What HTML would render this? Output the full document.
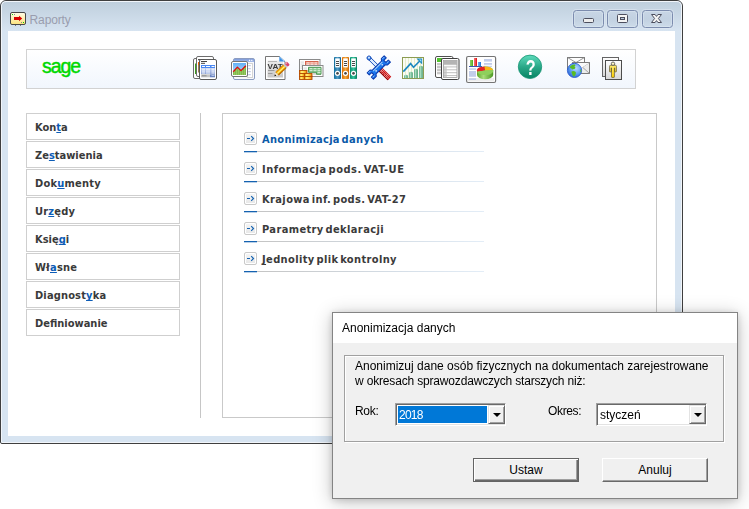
<!DOCTYPE html>
<html lang="pl">
<head>
<meta charset="utf-8">
<title>Raporty</title>
<style>
*{box-sizing:border-box;margin:0;padding:0}
html,body{width:749px;height:509px;overflow:hidden;background:#fff}
body{position:relative;font-family:"Liberation Sans",sans-serif;font-size:12px;color:#000}
.abs{position:absolute}
/* main window */
#win{position:absolute;left:0;top:0;width:683px;height:444px;border:1px solid #3f3f3f;border-radius:6px 6px 2px 2px;background:#d7e4f1;overflow:hidden}
#win .hl{position:absolute;left:0;top:0;right:0;bottom:0;border:1px solid #f1f5fa;border-radius:5px 5px 1px 1px}
#cap{position:absolute;left:1px;top:1px;right:1px;height:29px;background:linear-gradient(#bfcfdd,#d7e4f1)}
#client{position:absolute;left:7px;top:30px;width:667px;height:405px;background:#fff}
#title{position:absolute;left:29.6px;top:12px;font-size:12px;letter-spacing:-.15px;color:#9a9dae;white-space:nowrap;line-height:16px}
.cb{position:absolute;top:10px;height:18px;width:31px;border:1px solid #7c8cae;border-radius:3.5px;background:linear-gradient(#c8d6e5,#c2d1e1 50%,#cddbe9);box-shadow:0 0 0 1px rgba(225,234,244,.55), inset 0 0 0 1px rgba(225,235,245,.45)}
/* toolbar */
#tb{position:absolute;left:26px;top:49px;width:610px;height:40px;border:1px solid #d2d2d2;background:linear-gradient(#ffffff,#f1f6fd)}
#sage{position:absolute;left:42px;top:54px;font-size:19.5px;font-weight:normal;color:#00d800;-webkit-text-stroke:.45px #00d800;letter-spacing:-1.1px;line-height:24px;white-space:nowrap}
.ic{position:absolute;overflow:visible}
/* left buttons */
.lb{position:absolute;left:26px;width:154px;height:27px;border:1px solid #cfcfcf;background:#fff;font-family:"DejaVu Sans Condensed","DejaVu Sans","Liberation Sans",sans-serif;font-weight:bold;font-size:11px;color:#3a3a3a;line-height:27px;padding-left:8px;white-space:nowrap}
.lb u{color:#0c5cb6;text-decoration:underline;text-decoration-skip-ink:none;text-decoration-thickness:1px;text-underline-offset:1px}
.mi u{text-decoration-skip-ink:none;text-underline-offset:1px}
#vdiv{position:absolute;left:200px;top:113px;width:1px;height:305px;background:#c6c6c6}
#panel{position:absolute;left:222px;top:113px;width:435px;height:305px;border:1px solid #c9c9c9;background:#fff}
.mi{position:absolute;left:244px;width:240px;height:22px}
.mi .ar{position:absolute;left:0;top:0;width:13px;height:13px;border:1px solid #c9c9c9;border-radius:2px;background:linear-gradient(#f6f6f6,#e6e6e6);box-shadow:inset 0 0 0 1px #fff}
.mi .tx{position:absolute;left:18px;top:0px;font-family:"DejaVu Sans Condensed","DejaVu Sans","Liberation Sans",sans-serif;font-weight:bold;font-size:11px;line-height:15px;color:#3b3b3b;white-space:nowrap;word-spacing:-2px}
.mi.sel .tx{color:#0b5aa8}
.mi .ln{position:absolute;left:13px;top:19px;width:227px;height:1px;background:linear-gradient(90deg,#c4c4c4,#d4dde6 60%,#e3edf7)}
.mi .bl{position:absolute;left:0;top:19px;width:13px;height:2px;background:linear-gradient(#1562b0 50%,rgba(21,98,176,.3) 50%)}
/* dialog */
#dlg{position:absolute;left:332px;top:312px;width:406px;height:187px;border:1px solid #848484;background:#f0f0f0;box-shadow:0 3px 18px rgba(0,0,0,.24),0 1px 7px rgba(0,0,0,.14)}
#dcap{position:absolute;left:0;top:0;right:0;height:30px;background:#fff}
#dtitle{position:absolute;left:9px;top:8px;font-size:12px;line-height:14px;white-space:nowrap;color:#000}
#grp{position:absolute;left:11px;top:42px;width:380px;height:87px;border:1px solid #a0a0a0;box-shadow:1px 1px 0 #fff, inset 1px 1px 0 #fff}
.dt{position:absolute;white-space:nowrap;font-size:12px;line-height:15px;color:#000}
.combo{position:absolute;width:111px;height:23px;background:#fff;border:1px solid;border-color:#a0a0a0 #fff #fff #a0a0a0;box-shadow:inset 1px 1px 0 #696969, inset -1px -1px 0 #e3e3e3}
.combo .dd{position:absolute;right:0px;top:1px;width:17px;height:19px;background:#f0f0f0;border:1px solid;border-color:#e3e3e3 #696969 #696969 #e3e3e3;box-shadow:inset 1px 1px 0 #fff, inset -1px -1px 0 #a0a0a0}
.combo .dd:after{content:"";position:absolute;left:4px;top:7px;border:4px solid transparent;border-top:4px solid #000;border-bottom:0}
.combo .sel{position:absolute;left:2px;top:2px;width:89px;height:17px;background:#0078d7;color:#fff;font-size:12px;line-height:19px;padding-left:1px;letter-spacing:-.75px}
.combo .val{position:absolute;left:3px;top:3px;font-size:12px;line-height:17px;color:#000}
.btn{position:absolute;top:145px;height:24px;width:106px;background:#f0f0f0;text-align:center;font-size:12px;line-height:23px;border:1px solid;border-color:#fff #696969 #696969 #fff;box-shadow:inset -1px -1px 0 #a0a0a0}
.btn.def{border:1px solid #646464;box-shadow:inset 1px 1px 0 #fff, inset -1px -1px 0 #696969, inset -2px -2px 0 #a0a0a0;line-height:23px}
</style>
</head>
<body>
<div id="win">
  <div id="cap"></div>
  <div class="hl"></div>
  <div id="client"></div>
</div>
<div id="title">Raporty</div>
<div class="cb" style="left:573px"></div>
<div class="cb" style="left:607px"></div>
<div class="cb" style="left:642px"></div>

<div id="tb"></div>
<div id="sage">sage</div>

<div class="lb" style="top:113px">Kon<u>t</u>a</div>
<div class="lb" style="top:141px">Ze<u>s</u>tawienia</div>
<div class="lb" style="top:169px;letter-spacing:.22px">Dok<u>u</u>menty</div>
<div class="lb" style="top:197px;letter-spacing:.18px">Ur<u>z</u>ędy</div>
<div class="lb" style="top:225px">Księ<u>g</u>i</div>
<div class="lb" style="top:253px;letter-spacing:.2px">Wł<u>a</u>sne</div>
<div class="lb" style="top:281px;letter-spacing:.15px">Diagnost<u>y</u>ka</div>
<div class="lb" style="top:309px">Def<u>i</u>niowanie</div>

<div id="vdiv"></div>
<div id="panel"></div>

<div class="mi sel" style="top:132px"><div class="ar"></div><div class="tx" style="letter-spacing:.32px">Anonimizacja danych</div><div class="ln"></div><div class="bl"></div></div>
<div class="mi" style="top:162px"><div class="ar"></div><div class="tx" style="letter-spacing:.5px">Informacja pods. VAT-UE</div><div class="ln"></div><div class="bl"></div></div>
<div class="mi" style="top:192px"><div class="ar"></div><div class="tx" style="letter-spacing:.38px">Krajowa inf. pods. VAT-27</div><div class="ln"></div><div class="bl"></div></div>
<div class="mi" style="top:222px"><div class="ar"></div><div class="tx" style="letter-spacing:.38px">Parametry deklaracji</div><div class="ln"></div><div class="bl"></div></div>
<div class="mi" style="top:252px"><div class="ar"></div><div class="tx" style="letter-spacing:.37px"><u>J</u>ednolity plik kontrolny</div><div class="ln"></div><div class="bl"></div></div>

<!--ICONS-->
<svg class="abs" style="left:0;top:0;will-change:transform" width="749" height="509" viewBox="0 0 749 509">
<defs>
<linearGradient id="gCream" x1="0" y1="0" x2="0" y2="1"><stop offset="0" stop-color="#fffde8"/><stop offset="1" stop-color="#fde27c"/></linearGradient>
<linearGradient id="gTbl" x1="0" y1="0" x2="0" y2="1"><stop offset="0" stop-color="#c4d2f2"/><stop offset="1" stop-color="#8fa4d6"/></linearGradient>
<linearGradient id="gSky" x1="0" y1="0" x2="0" y2="1"><stop offset="0" stop-color="#62b0f6"/><stop offset="1" stop-color="#c6e4fc"/></linearGradient>
<linearGradient id="gDoc" x1="0" y1="0" x2="0" y2="1"><stop offset="0" stop-color="#ececec"/><stop offset="1" stop-color="#c6c6c6"/></linearGradient>
<linearGradient id="gDoc2" x1="0" y1="0" x2="0" y2="1"><stop offset="0" stop-color="#ffffff"/><stop offset="1" stop-color="#d6d6d6"/></linearGradient>
<linearGradient id="gBrick" x1="0" y1="0" x2="1" y2="0"><stop offset="0" stop-color="#f08a08"/><stop offset=".3" stop-color="#fff27a"/><stop offset=".6" stop-color="#ffd040"/><stop offset="1" stop-color="#e87800"/></linearGradient>
<linearGradient id="gBB" x1="0" y1="0" x2="1" y2="0"><stop offset="0" stop-color="#0f6c9c"/><stop offset=".5" stop-color="#4f9cc6"/><stop offset="1" stop-color="#0f5f8c"/></linearGradient>
<linearGradient id="gBO" x1="0" y1="0" x2="1" y2="0"><stop offset="0" stop-color="#d86c04"/><stop offset=".5" stop-color="#f4a83c"/><stop offset="1" stop-color="#cc6200"/></linearGradient>
<linearGradient id="gBG" x1="0" y1="0" x2="1" y2="0"><stop offset="0" stop-color="#08906e"/><stop offset=".5" stop-color="#34c49c"/><stop offset="1" stop-color="#067a5c"/></linearGradient>
<linearGradient id="gBar" x1="0" y1="0" x2="1" y2="0"><stop offset="0" stop-color="#2f9468"/><stop offset=".4" stop-color="#b4e4c8"/><stop offset="1" stop-color="#2a8c60"/></linearGradient>
<linearGradient id="gHelp" x1="0" y1="0" x2="0" y2="1"><stop offset="0" stop-color="#5edcbc"/><stop offset=".5" stop-color="#2aa888"/><stop offset="1" stop-color="#078464"/></linearGradient>
<radialGradient id="gGlobe" cx=".6" cy=".35" r=".7"><stop offset="0" stop-color="#b8dcff"/><stop offset=".6" stop-color="#5a9cf0"/><stop offset="1" stop-color="#2c62d4"/></radialGradient>
<linearGradient id="gPieS" x1="0" y1="0" x2="1" y2="0"><stop offset="0" stop-color="#5aa62c"/><stop offset=".4" stop-color="#a8dc78"/><stop offset="1" stop-color="#4c9824"/></linearGradient>
<linearGradient id="gWin" x1="0" y1="0" x2="0" y2="1"><stop offset="0" stop-color="#7c9ada"/><stop offset="1" stop-color="#aabeea"/></linearGradient>
<linearGradient id="gYel" x1="0" y1="0" x2="0" y2="1"><stop offset="0" stop-color="#ffec70"/><stop offset="1" stop-color="#ffd000"/></linearGradient>
</defs>

<!-- caption glyphs -->
<g id="capg">
<rect x="583.5" y="18.500" width="10" height="4" rx="1" fill="#ececec" stroke="#4c4e5e"/>
<rect x="617.500" y="14.500" width="10" height="8" rx="1" fill="#f4f4f4" stroke="#4c4e5e"/>
<rect x="620.500" y="17.500" width="4" height="2" fill="#b8c8dc" stroke="#4c4e5e"/>
<path d="M651.500 14.500h3.600l1.400 1.900 1.400-1.900h3.600l-3.100 4 3.100 4h-3.600l-1.400-1.900-1.400 1.900h-3.600l3.100-4z" fill="#f4f4f4" stroke="#4c4e5e" stroke-linejoin="round"/>
</g>
<!-- /caption glyphs -->
<!-- arrows -->
<g fill="#1262b2" stroke="#1262b2" stroke-width="0">
<path d="M247 138h3v1h-3z"/><path d="M251.200 136.200l2.300 2.300-2.300 2.300" fill="none" stroke-width="1.150"/>
<path d="M247 168h3v1h-3z"/><path d="M251.200 166.200l2.300 2.300-2.300 2.300" fill="none" stroke-width="1.150"/>
<path d="M247 198h3v1h-3z"/><path d="M251.200 196.200l2.300 2.300-2.300 2.300" fill="none" stroke-width="1.150"/>
<path d="M247 228h3v1h-3z"/><path d="M251.200 226.200l2.300 2.300-2.300 2.300" fill="none" stroke-width="1.150"/>
<path d="M247 258h3v1h-3z"/><path d="M251.200 256.200l2.300 2.300-2.300 2.300" fill="none" stroke-width="1.150"/>
</g>
<!-- /arrows -->
<!-- title icon -->
<g id="i-title">
<rect x="10.5" y="12.5" width="15" height="12" rx="1.5" fill="url(#gCream)" stroke="#484848"/>
<path d="M14 17h5v-1.2l3.2 2.7-3.2 2.7v-1.2h-5z" fill="#d80000"/>
<rect x="12" y="14" width="1" height="1" fill="#00d000"/><rect x="14" y="14" width="1" height="1" fill="#888"/>
<rect x="23" y="22" width="1" height="1" fill="#00d000"/><rect x="21" y="22" width="1" height="1" fill="#888"/>
<rect x="15" y="25" width="1" height="1" fill="#777"/><rect x="20" y="25" width="1" height="1" fill="#777"/>
</g>

<!-- 1: stacked docs -->
<g id="i1">
<rect x="193.5" y="58.5" width="14" height="20" rx="1.5" fill="#fff" stroke="#5c5c5c" stroke-width=".9"/>
<rect x="195" y="63.5" width="1.4" height="10.5" fill="#3aa020"/>
<rect x="196.5" y="56.5" width="17" height="20" rx="1.5" fill="#fff" stroke="#5c5c5c" stroke-width=".9"/>
<rect x="198" y="59" width="6" height="1.2" fill="#555"/>
<rect x="198" y="62" width="1.4" height="3" fill="#f06000"/><rect x="198" y="65" width="1.4" height="7.5" fill="#a08050"/>
<rect x="199.5" y="59.5" width="17" height="20" rx="1.5" fill="#fff" stroke="#505050" stroke-width=".95"/>
<rect x="201" y="61" width="6" height="1" fill="#444"/><rect x="201" y="62.8" width="4" height="1.2" fill="#666"/>
<rect x="201" y="65" width="14" height="3" fill="#4a88f2"/>
<rect x="201" y="68" width="14" height="6" fill="url(#gTbl)"/>
<g fill="#f6f9ff"><rect x="202" y="66" width="3" height="1"/><rect x="206" y="66" width="4" height="1"/><rect x="211.5" y="66" width="3" height="1"/>
<rect x="202" y="68.6" width="3" height="1.1"/><rect x="206" y="68.6" width="4" height="1.1"/><rect x="211.5" y="68.6" width="3" height="1.1"/>
<rect x="202" y="70.5" width="3" height="1.1"/><rect x="206" y="70.5" width="4" height="1.1"/><rect x="211.5" y="70.5" width="3" height="1.1"/>
<rect x="202" y="72.4" width="3" height="1.1" opacity=".85"/><rect x="206" y="72.4" width="4" height="1.1" opacity=".85"/><rect x="211.5" y="72.4" width="3" height="1.1" opacity=".85"/></g>
<rect x="201" y="74.3" width="9" height="3" fill="#c4c4c4"/><rect x="202" y="75.3" width="4.5" height="1" fill="#8a8a8a"/>
<rect x="210" y="74.3" width="5" height="3" fill="#6c86c2"/><rect x="211.5" y="75" width="3" height="1" fill="#b4c4e6"/>
</g>

<!-- 2: chart window -->
<g id="i2">
<rect x="233.5" y="58.5" width="21" height="21" rx="1.5" fill="#f8f9fc" stroke="#8c9cc0"/>
<rect x="234" y="59" width="20" height="3" fill="url(#gWin)"/>
<rect x="249" y="59.8" width="1.2" height="1.2" fill="#fff"/><rect x="251.2" y="59.8" width="1.2" height="1.2" fill="#fff"/>
<rect x="247.5" y="63.5" width="5" height="14" fill="#fff" stroke="#d4d4d4"/>
<g fill="#b4c0e2"><rect x="248.2" y="65.2" width="2.6" height="1"/><rect x="248.2" y="68.2" width="2.6" height="1"/><rect x="248.2" y="71.2" width="2.6" height="1"/><rect x="248.2" y="74.2" width="2.6" height="1"/></g>
<rect x="231.5" y="61.5" width="16" height="15" rx="1.5" fill="#fff" stroke="#747474"/>
<rect x="233" y="63" width="13" height="12" fill="url(#gSky)"/>
<path d="M233 72l4.4-4.8 3.6 3.4 5-5V75h-13z" fill="#80ba4c"/>
<g stroke="#a4d070" stroke-width=".6"><path d="M234.5 71v4M236.5 69v6M238.5 69v6M240.5 71v4M242.5 70v5M244.5 68v7"/></g>
<path d="M233.2 71.8l4.2-4.7 3.6 3.5 4.8-4.8" fill="none" stroke="#e00808" stroke-width="1.300" stroke-linejoin="round"/>
</g>

<!-- 3: VAT doc with pencil -->
<g id="i3">
<path d="M265.5 56.5h14l5.500 5.200v17.800h-19.500z" fill="#fff" stroke="#686868" stroke-width=".9"/>
<rect x="267.500" y="60.500" width="15.500" height="17" fill="url(#gDoc)"/>
<path d="M279.300 56.300l5.700 5.200h-5.700z" fill="#3c90e4"/><path d="M279.800 57.200l4.300 3.900" stroke="#b4dcff" stroke-width=".8"/>
<rect x="268" y="61" width="9" height=".8" fill="#aaa"/>
<text x="267.600" y="68.600" font-family="Liberation Sans,sans-serif" font-weight="bold" font-size="7.600" fill="#383838" textLength="15" lengthAdjust="spacingAndGlyphs">VAT</text>
<rect x="268" y="70" width="6.500" height="1" fill="#9a9a9a"/><rect x="268" y="73" width="4.500" height="1" fill="#9a9a9a"/>
<g transform="translate(274.300 76.300) rotate(-43.200)">
<path d="M0 0l4-2.200v4.400z" fill="#ffeccc"/><path d="M0 0l1.900-1.050v2.100z" fill="#111"/>
<rect x="4" y="-2.200" width="10.500" height="4.400" fill="#ffd824" stroke="#8a4c00" stroke-width=".5"/><rect x="4" y="-2.200" width="10.500" height="1.300" fill="#ee9a08"/><rect x="4" y="1.100" width="10.500" height="1.100" fill="#c46800"/><rect x="4" y="-.5" width="10.500" height=".7" fill="#fff49c"/>
<rect x="14.500" y="-2.300" width="1.700" height="4.600" fill="#c4c4cc"/>
<rect x="16.200" y="-2.300" width="3.100" height="4.600" rx="1.200" fill="#d8466a"/><rect x="16.400" y="-1.900" width="2.600" height="1.200" rx=".6" fill="#f0a0b0"/>
</g>
</g>

<!-- 4: tables + bricks -->
<g id="i4">
<rect x="299.500" y="59.500" width="20.500" height="12" fill="#fff" stroke="#8a8a8a"/>
<g fill="#dcdcdc"><rect x="300.500" y="61.500" width="3.500" height="1.200"/><rect x="300.500" y="63.500" width="3.500" height="1.200"/><rect x="300.500" y="65.500" width="3.500" height="1.200"/><rect x="300.500" y="67.500" width="3.500" height="1.200"/></g>
<rect x="305.500" y="61.500" width="12.500" height="5" fill="#ec9886" stroke="#d4644c"/>
<g fill="#fbe4de"><rect x="306.500" y="62.400" width="3" height="1"/><rect x="310.500" y="62.400" width="3" height="1"/><rect x="314.500" y="62.400" width="3" height="1"/><rect x="306.500" y="64.200" width="3" height="1"/><rect x="310.500" y="64.200" width="3" height="1"/><rect x="314.500" y="64.200" width="3" height="1"/></g>
<rect x="302.500" y="65.500" width="20.500" height="11" fill="#fff" stroke="#8a8a8a"/>
<g fill="#dcdcdc"><rect x="303.500" y="67.500" width="3.500" height="1.200"/><rect x="303.500" y="69.500" width="3.500" height="1.200"/></g>
<rect x="313" y="72.700" width="3.500" height="2" fill="#d0d0d0"/>
<path d="M308.500 67.300h12.500v7h-4.500v-2h-8z" fill="#7cc084" stroke="#4a9852"/>
<g fill="#e4f4e4"><rect x="309.500" y="68.200" width="3" height="1"/><rect x="313.500" y="68.200" width="3" height="1"/><rect x="317.500" y="68.200" width="3" height="1"/><rect x="309.500" y="70.200" width="3" height="1"/><rect x="313.500" y="70.200" width="3" height="1"/><rect x="317.500" y="70.200" width="3" height="1"/><rect x="317.500" y="72.200" width="3" height="1"/></g>
<g stroke="#b44c00" stroke-width=".9" fill="url(#gBrick)">
<rect x="299.500" y="70.500" width="7.500" height="3"/>
<rect x="299.500" y="73.500" width="5" height="3"/><rect x="304.500" y="73.500" width="7.500" height="3"/>
<rect x="299.500" y="76.500" width="5" height="3"/><rect x="304.500" y="76.500" width="7.500" height="3"/>
</g>
</g>

<!-- 5: binders -->
<g id="i5">
<rect x="334" y="57" width="7" height="22" rx=".8" fill="url(#gBB)"/>
<rect x="342" y="57" width="7" height="22" rx=".8" fill="url(#gBO)"/>
<rect x="350" y="57" width="7" height="22" rx=".8" fill="url(#gBG)"/>
<g fill="#fff"><rect x="335.200" y="58.400" width="4.600" height="9"/><rect x="343.200" y="58.400" width="4.600" height="9"/><rect x="351.200" y="58.400" width="4.600" height="9"/>
<circle cx="337.500" cy="73.300" r="2.600"/><circle cx="345.500" cy="73.300" r="2.600"/><circle cx="353.500" cy="73.300" r="2.600"/></g>
<g fill="#484848"><circle cx="337.500" cy="73.300" r="1.350"/><circle cx="345.500" cy="73.300" r="1.350"/><circle cx="353.500" cy="73.300" r="1.350"/>
<rect x="336" y="61" width="3" height="1"/><rect x="336" y="63" width="3" height="1"/><rect x="336" y="65" width="3" height="1"/>
<rect x="344" y="61" width="3" height="1"/><rect x="344" y="63" width="3" height="1"/><rect x="344" y="65" width="3" height="1"/>
<rect x="352" y="61" width="3" height="1"/><rect x="352" y="63" width="3" height="1"/><rect x="352" y="65" width="3" height="1"/></g>
</g>

<!-- 6: tools -->
<g id="i6">
<g transform="translate(369 58) rotate(45)">
<rect x="16.500" y="-2.500" width="12.500" height="5" fill="#c80000"/>
<rect x="16.500" y="1.500" width="12.500" height="1" fill="#8c0000"/>
<path d="M17 -1.500h11.500M17 -.1h11.500M17 1.200h11.500" stroke="#fff" stroke-width=".75" stroke-dasharray="1.300 .5"/>
<rect x="0" y="-1.500" width="14" height="3" fill="#dcecff" stroke="#1048b8" stroke-width=".9"/>
<circle cx="0" cy="0" r="2" fill="#5ca4f8" stroke="#0c40b0" stroke-width=".9"/><circle cx="-.3" cy="-.3" r=".9" fill="#e4f0ff"/>
</g>
<g transform="translate(378.800 67.500) rotate(-45)">
<path d="M-6.500-2.600h13l1.500-1.800h4v2.900h-3.400v3h3.400v2.900h-4l-1.500-1.800h-13l-1.500 1.800h-4v-2.900h3.400v-3h-3.400v-2.900h4z" fill="#1c76ec" stroke="#0c3cb0" stroke-width="1.100" stroke-linejoin="round"/>
<path d="M-6.500-1.500h13" stroke="#9cd0ff" stroke-width="1.100"/>
<path d="M-11.400-3.500h3M8.400-3.500h3M-11.400 2.500h2.400M9 2.500h2.400" stroke="#8cc4ff" stroke-width=".9"/>
<circle cx="-4.300" cy=".5" r=".75" fill="#eef6ff"/><circle cx="4.300" cy=".5" r=".75" fill="#eef6ff"/>
</g>
</g>

<!-- 7: growth chart -->
<g id="i7">
<rect x="402.500" y="57.500" width="21" height="21" fill="#fbfcf4" stroke="#8c9c52"/>
<g stroke="#e6eecc" stroke-width="1"><path d="M405.500 58v20M408.500 58v20M411.500 58v20M414.500 58v20M417.500 58v20M420.500 58v20"/></g>
<g fill="url(#gBar)"><path d="M404.300 78v-2a1.700 1.200 0 0 1 3.400 0v2z"/><path d="M409.300 78v-5a1.700 1.200 0 0 1 3.400 0v5z"/><path d="M414.300 78v-8a1.700 1.200 0 0 1 3.400 0v8z"/><path d="M419.300 78v-11a1.700 1.200 0 0 1 3.400 0v11z"/></g>
<path d="M403.300 71.600l7.300-8 2.900 3.600 6.500-6.400" fill="none" stroke="#1c88c0" stroke-width="1.600"/>
<path d="M416.400 58.600h5.800v5.800z" fill="#1c88c0"/><path d="M418.900 59.500h2.400v2.400z" fill="#9ce0ff"/>
</g>

<!-- 8: docs -->
<g id="i8">
<rect x="435.500" y="56.500" width="17.500" height="21" rx="1.500" fill="#fff" stroke="#505050"/>
<rect x="437" y="58" width="5" height="4" fill="#52c430"/>
<g fill="#c8c8c8"><rect x="437" y="63" width="5" height="2.300"/><rect x="437" y="66" width="5" height="2.300"/><rect x="437" y="69" width="5" height="2.300"/><rect x="437" y="72" width="5" height="2.300"/></g>
<rect x="441.500" y="58.500" width="17.500" height="21" rx="1.500" fill="#fff" stroke="#404040"/>
<rect x="443.500" y="60.500" width="13.500" height="17" fill="#fff" stroke="#9a9a9a" stroke-width=".8"/>
<rect x="443.500" y="60.300" width="13.500" height="3.700" fill="#b4b4b4"/>
<g fill="#d2d2d2"><rect x="444" y="67.300" width="2.800" height="2.200"/><rect x="444" y="70.200" width="2.800" height="2.200"/><rect x="444" y="73.100" width="2.800" height="2.200"/><rect x="444" y="76" width="2.800" height="1.200"/></g>
<g stroke="#a4a4a4" stroke-width=".7"><path d="M443.500 64.600h13.500M443.500 66.900h13.500M443.500 69.800h13.500M443.500 72.700h13.500M443.500 75.600h13.500"/></g>
</g>

<!-- 9: report -->
<g id="i9">
<rect x="466.600" y="56.500" width="29" height="26" rx="1.500" fill="#fff" stroke="#757575" stroke-width="1.200"/>
<rect x="468" y="78" width="26" height="3.500" fill="#ededed"/>
<rect x="470" y="60" width="3" height="6" fill="#58b028"/><rect x="470.400" y="60" width="1" height="6" fill="#a4dc7c"/>
<rect x="474" y="58" width="3" height="8" fill="#e02020"/><rect x="474.400" y="58" width="1" height="8" fill="#ff9090"/>
<rect x="478" y="62" width="3" height="4" fill="#2c7cd8"/><rect x="478.400" y="62" width="1" height="4" fill="#8cc0f4"/>
<rect x="469" y="66" width="13" height=".9" fill="#2444a4"/>
<g fill="#c2cdea"><rect x="484" y="59" width="8" height="2.600"/><rect x="484" y="63" width="8" height="1.800"/><rect x="484" y="65.800" width="8" height="1.100"/>
<rect x="469" y="68.300" width="7" height="1.500"/><rect x="469" y="71" width="7" height="5.800"/><rect x="469" y="78.200" width="7" height="1.800"/></g>
<path d="M477 70.500v4.500a8.100 4.200 0 0 0 16.200 0v-4.500z" fill="url(#gPieS)"/>
<ellipse cx="485.100" cy="70.500" rx="8.100" ry="4.100" fill="#8ccc58"/>
<path d="M485.100 70.500l-.5-4.100a8.100 4.100 0 0 0-7.500 5.300z" fill="#e42424"/>
<path d="M485.100 70.500l-.5-4.100a8.100 4.100 0 0 1 8.500 3.700z" fill="#fcb414"/>
<path d="M485.100 70.500l-8 1.200a8.100 4.100 0 0 0 16-1.600z" fill="#8ed05c"/>
</g>

<!-- 10: help -->
<g id="i10">
<circle cx="530" cy="66.800" r="11.700" fill="url(#gHelp)" stroke="#169474" stroke-width=".8"/>
<text x="530.700" y="75.100" text-anchor="middle" font-family="Liberation Sans,sans-serif" font-weight="bold" font-size="22" fill="#fff" transform="translate(530.700 0) scale(.74 1) translate(-530.700 0)">?</text>
</g>

<!-- 11: mail + globe -->
<g id="i11">
<rect x="567.500" y="57.500" width="17" height="12" fill="#fff" stroke="#7a7a7a"/>
<path d="M567.500 57.500l8.500 5 8.500-5" fill="none" stroke="#8a8a8a" stroke-width=".9"/>
<rect x="572.500" y="62.500" width="17" height="11" fill="#ededed" stroke="#7a7a7a"/>
<path d="M572.500 62.500l8.500 5.500 8.500-5.500M589.500 73.500l-7-6.300" fill="none" stroke="#9a9a9a" stroke-width=".9"/>
<path d="M573 63h16l-8 5.200z" fill="#fafafa"/>
<circle cx="574.500" cy="70.400" r="7.100" fill="url(#gGlobe)" stroke="#2c5ed0" stroke-width=".9"/>
<path d="M569.500 67.500c1-2 3.500-3.300 5.500-3 .8.500.2 1.600-.6 2 1 .4 1.300 1.300.6 2-.8.800-2.200.3-2.800 1.100-.5-1.200-1.700-1.800-2.700-2.100z" fill="#58bc24"/>
<path d="M571.500 71.500c1.200-.9 3.200-.6 4.200.4.600 1.300-.2 3-1.200 4.300-1 .6-1.800-.2-2-1.200-.2-1.200-1.300-2.200-1-3.500z" fill="#58bc24"/>
<path d="M580.500 69c.8.800 1 2.500.5 3.600-.6-.6-1.200-2.200-.5-3.600z" fill="#58bc24"/>
</g>

<!-- 12: person docs -->
<g id="i12">
<rect x="602.500" y="57.500" width="16" height="19" fill="url(#gDoc2)" stroke="#646464"/>
<rect x="605.500" y="60.500" width="16" height="19" fill="url(#gDoc2)" stroke="#4c4c4c"/>
<path d="M609.600 66.200q0-.9.900-.9h5q.9 0 .9.900v5.200q0 .5-.5.500h-.8q-.4 0-.4-.5v-3.500h-.3v9q0 .5-.5.500h-1.900q-.5 0-.5-.5v-9h-.3v3.500q0 .5-.4.500h-.8q-.5 0-.5-.5z" fill="url(#gYel)" stroke="#5a5230" stroke-width=".7"/>
<circle cx="613" cy="63.700" r="1.700" fill="#fff8c4" stroke="#4a4a4a" stroke-width=".8"/>
</g>
</svg>
<!--/ICONS-->

<div id="dlg">
  <div id="dcap"></div>
  <div id="dtitle">Anonimizacja danych</div>
  <div id="grp"></div>
  <div class="dt" style="left:22px;top:46px">Anonimizuj dane osób fizycznych na dokumentach zarejestrowane</div>
  <div class="dt" style="left:22px;top:61px;letter-spacing:-.17px">w okresach sprawozdawczych starszych niż:</div>
  <div class="dt" style="left:22px;top:91px;letter-spacing:-.3px">Rok:</div>
  <div class="combo" style="left:62px;top:90px"><div class="sel">2018</div><div class="dd"></div></div>
  <div class="dt" style="left:215px;top:91px;letter-spacing:-.35px">Okres:</div>
  <div class="combo" style="left:263px;top:90px"><div class="val">styczeń</div><div class="dd"></div></div>
  <div class="btn def" style="left:140px">Ustaw</div>
  <div class="btn" style="left:269px">Anuluj</div>
</div>
</body>
</html>
